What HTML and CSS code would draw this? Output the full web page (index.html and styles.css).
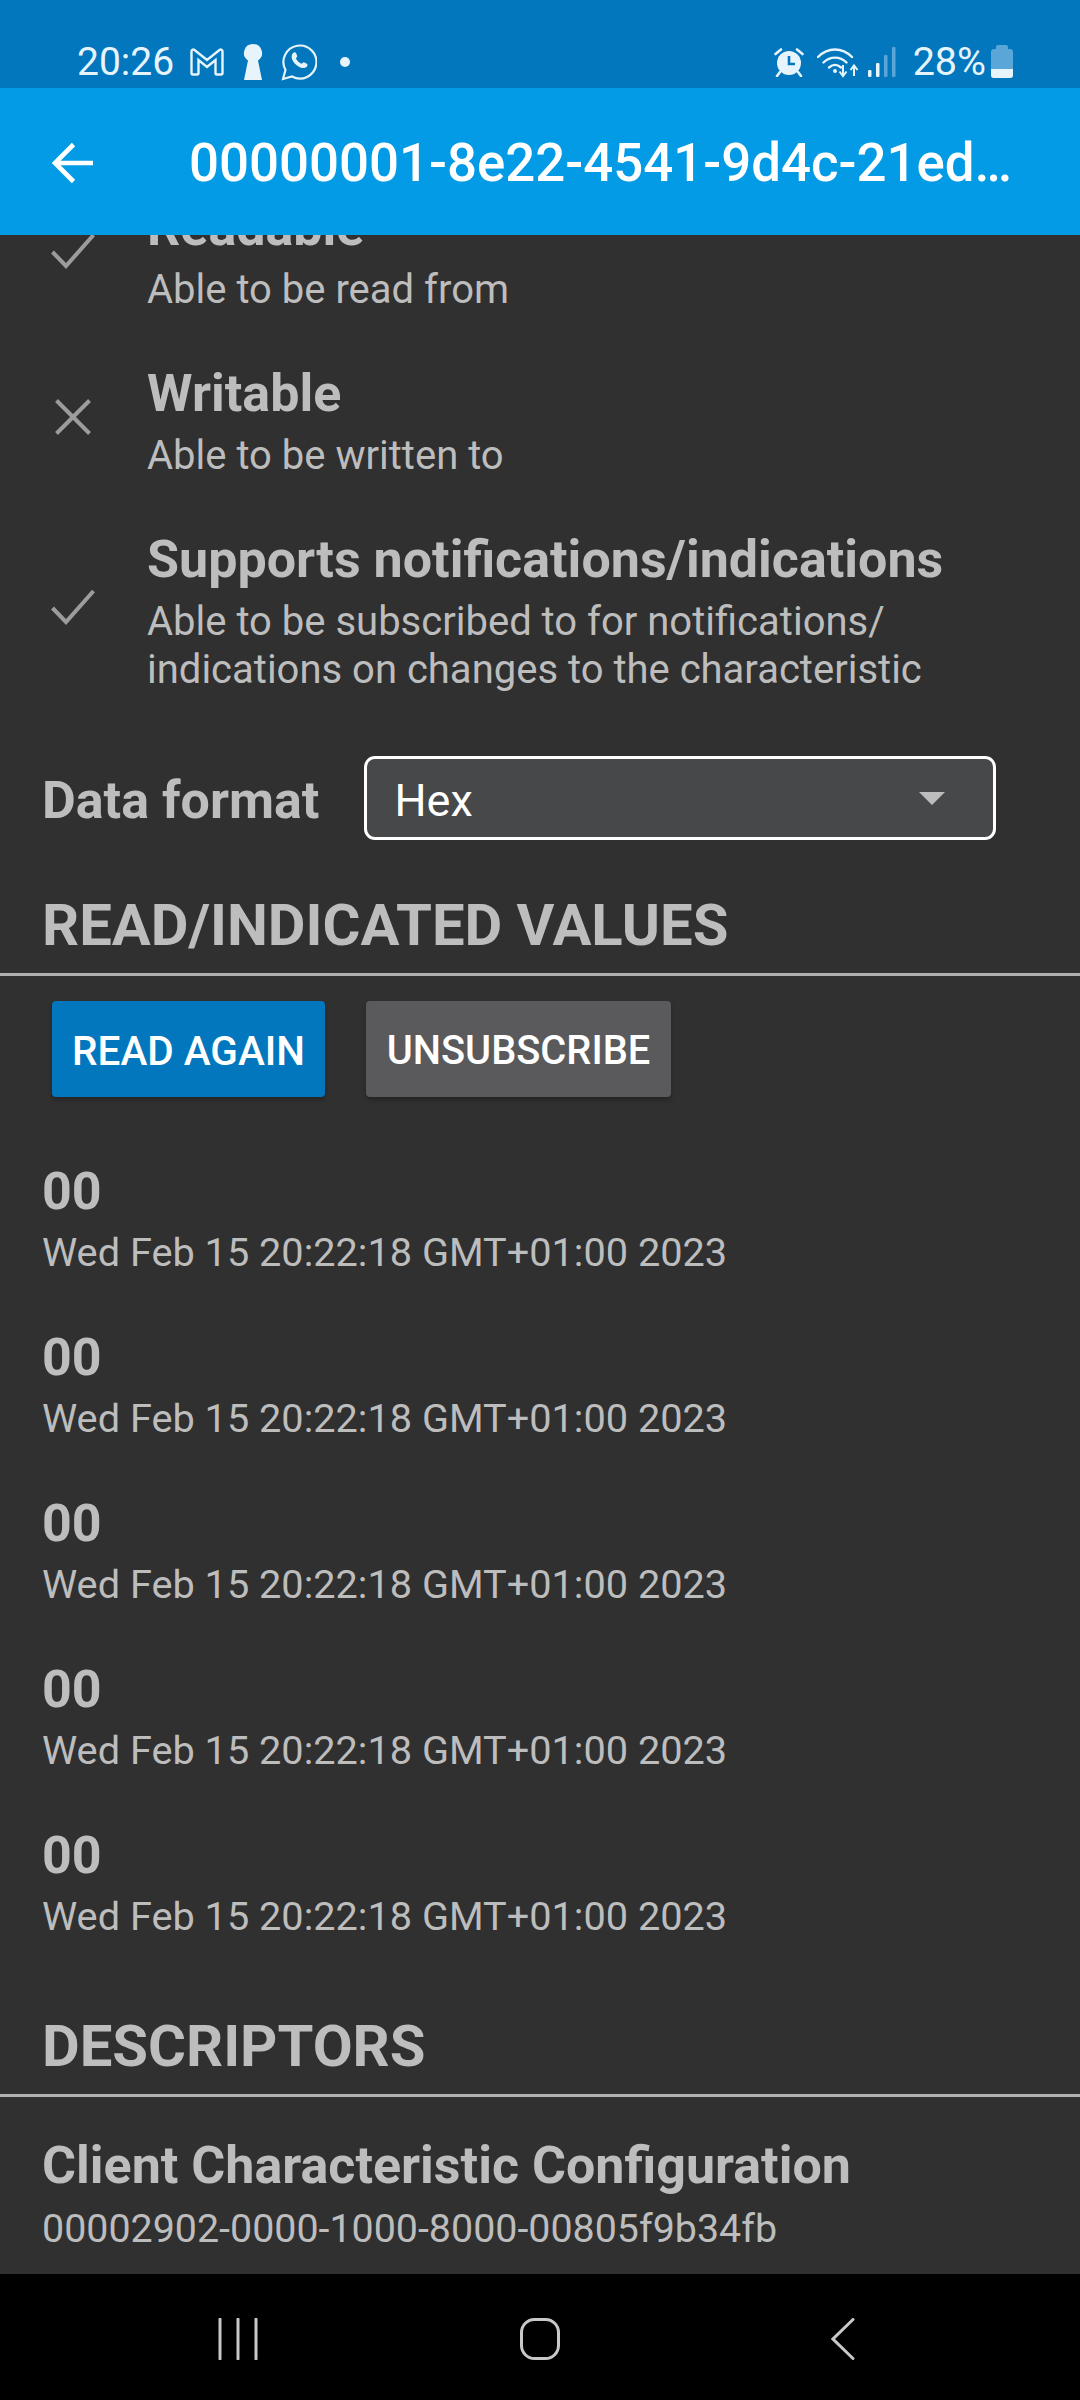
FILE: index.html
```html
<!DOCTYPE html>
<html lang="en">
<head>
<meta charset="utf-8">
<title>Characteristic</title>
<link rel="stylesheet" href="styles.css">
</head>
<body>
<div class="screen">
  <header class="status">
    <div class="status-group">
      <span class="time">20:26</span>
      <svg class="ic-gmail" viewBox="0 0 34 28"><path d="M1.500 3.500C1.500 2 3 1 4.500 2L17 12 29.500 2C31 1 32.500 2 32.500 3.500V25C32.500 26 32 26.500 31 26.500H27C26 26.500 25.500 26 25.500 25V12L17 19 8.500 12V25C8.500 26 8 26.500 7 26.500H3C2 26.500 1.500 26 1.500 25Z" fill="none" stroke="#e8f4fb" stroke-width="2.400"/></svg>
      <svg class="ic-key" viewBox="0 0 20 36"><path d="M10 0a9 9 0 0 1 5 16.500L19 36H1L5 16.500A9 9 0 0 1 10 0Z" fill="#e8f4fb"/></svg>
      <svg class="ic-wa" viewBox="0 0 36 38"><path d="M2 36l2.500-9A16.500 16.500 0 1 1 11 33.500Z" fill="none" stroke="#e8f4fb" stroke-width="2.200"/><path d="M12 10c1-1 2.500-1.200 3 0l1.200 3c.2.600-1.200 2-1.200 2.500.8 2.200 3 4.300 5.500 5.300.6 0 1.800-1.700 2.400-1.500l3 1.500c1 .6.600 2.300-.4 3.200-2 1.800-5 1.200-8-.5-3-1.700-5.500-4.500-6.500-7.500-.6-2-.3-4.500 1-6Z" fill="#e8f4fb"/></svg>
      <svg class="ic-dot" viewBox="0 0 10 10"><circle cx="5" cy="5" r="5" fill="#e8f4fb"/></svg>
    </div>
    <div class="status-group">
      <svg class="ic-alarm" viewBox="0 0 30 30"><circle cx="15" cy="16" r="12" fill="#e8f4fb"/><path d="M1.500 7L7 2.500M28.500 7L23 2.500M6 25l-3 4M24 25l3 4" stroke="#e8f4fb" stroke-width="2.600" stroke-linecap="round"/><path d="M15 9v8h6" fill="none" stroke="#0277bd" stroke-width="2.600"/></svg>
      <svg class="ic-wifi" viewBox="0 0 42 32"><path d="M1 11C11 1 25 1 35 11M6.500 16.500C13 10 23 10 29.500 16.500M12 21.500C16 18 20 18 24 21.500" fill="none" stroke="#e8f4fb" stroke-width="2.400" stroke-linecap="round"/><circle cx="18" cy="25" r="2" fill="#e8f4fb"/><path d="M26 19v10M22.500 25.500L26 30l3.500-4.500M37 30V20M33.500 24L37 19.500l3.500 4.500" fill="none" stroke="#e8f4fb" stroke-width="2"/></svg>
      <svg class="ic-signal" viewBox="0 0 28 30"><rect x="0" y="23" width="3.500" height="7" rx="1" fill="#e8f4fb"/><rect x="8" y="16" width="3.500" height="14" rx="1" fill="#e8f4fb"/><rect x="16" y="8" width="3.500" height="22" rx="1" fill="#5ba6d8"/><rect x="24" y="0" width="3.500" height="30" rx="1" fill="#5ba6d8"/></svg>
      <span class="pct">28%</span>
      <svg class="ic-batt" viewBox="0 0 22 33"><path d="M7 0h8a2 2 0 0 1 2 2v2h2a3 3 0 0 1 3 3v23a3 3 0 0 1-3 3H3a3 3 0 0 1-3-3V7a3 3 0 0 1 3-3h2V2a2 2 0 0 1 2-2Z" fill="#5ba6d8"/><path d="M0 24h22v6a3 3 0 0 1-3 3H3a3 3 0 0 1-3-3Z" fill="#e8f4fb"/></svg>
    </div>
  </header>

  <div class="appbar">
    <svg class="ic-back" viewBox="0 0 42 42"><path d="M41 21H3M21.500 2.500L3 21l18.500 18.500" fill="none" stroke="#fff" stroke-width="4.600"/></svg>
    <h1 class="appbar-title">00000001-8e22-4541-9d4c-21ed…</h1>
  </div>

  <main class="content">
    <div class="scroller">
      <section class="props">
        <div class="prop">
          <svg class="prop-icon" viewBox="0 0 44 36"><path d="M1.500 19L15 33 42.500 2" fill="none" stroke="#9c9c9c" stroke-width="4"/></svg>
          <div class="prop-text">
            <div class="prop-title">Readable</div>
            <div class="prop-desc">Able to be read from</div>
          </div>
        </div>
        <div class="prop">
          <svg class="prop-icon prop-x" viewBox="0 0 36 36"><path d="M1.500 1.500l33 33M34.500 1.500l-33 33" fill="none" stroke="#9c9c9c" stroke-width="4"/></svg>
          <div class="prop-text">
            <div class="prop-title">Writable</div>
            <div class="prop-desc">Able to be written to</div>
          </div>
        </div>
        <div class="prop">
          <svg class="prop-icon" viewBox="0 0 44 36"><path d="M1.500 19L15 33 42.500 2" fill="none" stroke="#9c9c9c" stroke-width="4"/></svg>
          <div class="prop-text">
            <div class="prop-title">Supports notifications/indications</div>
            <div class="prop-desc">Able to be subscribed to for notifications/<br>indications on changes to the characteristic</div>
          </div>
        </div>
      </section>

      <div class="format">
        <span class="format-label">Data format</span>
        <div class="dropdown">
          <span class="dropdown-value">Hex</span>
          <span class="caret"></span>
        </div>
      </div>

      <h2 class="section-head">READ/INDICATED VALUES</h2>
      <div class="actions">
        <button class="btn btn-primary">READ AGAIN</button>
        <button class="btn btn-grey">UNSUBSCRIBE</button>
      </div>

      <ul class="values">
        <li class="value"><div class="value-main">00</div><div class="value-sub">Wed Feb 15 20:22:18 GMT+01:00 2023</div></li>
        <li class="value"><div class="value-main">00</div><div class="value-sub">Wed Feb 15 20:22:18 GMT+01:00 2023</div></li>
        <li class="value"><div class="value-main">00</div><div class="value-sub">Wed Feb 15 20:22:18 GMT+01:00 2023</div></li>
        <li class="value"><div class="value-main">00</div><div class="value-sub">Wed Feb 15 20:22:18 GMT+01:00 2023</div></li>
        <li class="value"><div class="value-main">00</div><div class="value-sub">Wed Feb 15 20:22:18 GMT+01:00 2023</div></li>
      </ul>

      <h2 class="section-head section-desc">DESCRIPTORS</h2>
      <div class="descriptor">
        <div class="value-main">Client Characteristic Configuration</div>
        <div class="value-sub uuid">00002902-0000-1000-8000-00805f9b34fb</div>
      </div>
    </div>
  </main>

  <nav class="navbar">
    <svg class="nav-recents" viewBox="0 0 40 42"><path d="M2 1v40M20 1v40M38 1v40" stroke="#c8c8c8" stroke-width="3" stroke-linecap="round" fill="none"/></svg>
    <svg class="nav-home" viewBox="0 0 40 42"><rect x="1.500" y="1.500" width="37" height="39" rx="13" fill="none" stroke="#c8c8c8" stroke-width="3"/></svg>
    <svg class="nav-back" viewBox="0 0 24 42"><path d="M22 1.500L2 21l20 19.500" fill="none" stroke="#c8c8c8" stroke-width="3" stroke-linecap="round"/></svg>
  </nav>
</div>
</body>
</html>
```
FILE: styles.css
```css
* { box-sizing: border-box; }
html, body { margin: 0; padding: 0; }
body { font-family: Roboto, "Liberation Sans", sans-serif; background: #303030; }
.screen { width: 1080px; height: 2400px; display: flex; flex-direction: column; overflow: hidden; }

.status { height: 88px; flex: none; background: #0277bd; display: flex; justify-content: space-between; align-items: flex-start; padding: 43px 67px 0 77px; color: #e8f4fb; font-size: 39px; line-height: 36px; }
.status-group { display: flex; align-items: center; height: 37px; }
.ic-gmail { width: 34px; height: 28px; margin-left: 16px; }
.ic-key { width: 20px; height: 36px; margin-left: 19px; }
.ic-wa { width: 36px; height: 38px; margin-left: 18px; }
.ic-dot { width: 10px; height: 10px; margin-left: 23px; }
.ic-alarm { width: 30px; height: 30px; }
.ic-wifi { width: 42px; height: 32px; margin-left: 13px; }
.ic-signal { width: 28px; height: 30px; margin-left: 9px; }
.pct { margin-left: 17px; font-size: 39.500px; }
.ic-batt { width: 22px; height: 33px; margin-left: 5px; }

.appbar { height: 147px; flex: none; background: #039be5; display: flex; align-items: center; padding: 3px 0 0 52px; position: relative; z-index: 1; }
.ic-back { width: 42px; height: 42px; flex: none; }
.appbar-title { margin: 0 0 0 95px; font-size: 52.800px; font-weight: 500; color: #fff; white-space: nowrap; line-height: 60px; }

.content { flex: 1; min-height: 0; overflow: hidden; }
.scroller { margin-top: -37px; }

.prop { display: flex; align-items: center; padding-left: 51px; padding-bottom: 50px; }
.prop-icon { width: 44px; height: 36px; flex: none; margin-bottom: 11px; }
.prop-x { width: 36px; margin-left: 4px; margin-right: 4px; }
.prop-text { margin-left: 52px; }
.prop-title { font-size: 52px; font-weight: 700; line-height: 60px; color: #bdbdbd; margin-bottom: 8px; }
.prop-desc { font-size: 40px; line-height: 48px; color: #bdbdbd; }

.format { display: flex; align-items: center; padding-left: 42px; margin-top: 12px; }
.format-label { font-size: 52px; font-weight: 700; color: #bdbdbd; line-height: 60px; padding-top: 5px; }
.dropdown { margin-left: 45px; width: 632px; height: 84px; border: 3px solid #fff; border-radius: 11px; background: #47484a; display: flex; align-items: center; justify-content: space-between; padding: 0 48px 0 27px; color: #fff; font-size: 45px; }
.dropdown-value { padding-top: 5px; }
.caret { width: 0; height: 0; border-left: 13px solid transparent; border-right: 13px solid transparent; border-top: 13px solid #bdbdbd; }

.section-head { margin: 52px 0 0; padding: 0 0 15px 42px; font-size: 58px; line-height: 66px; font-weight: 700; color: #bdbdbd; border-bottom: 3px solid #b0b0b0; }
.actions { display: flex; gap: 41px; padding: 25px 0 0 52px; }
.btn { height: 96px; border: 0; border-radius: 4px; color: #fff; font: 500 40.500px/46px Roboto, "Liberation Sans", sans-serif; box-shadow: 0 3px 4px rgba(0,0,0,.25); padding: 4px 0 0; }
.btn-primary { background: #0277bd; width: 273px; }
.btn-grey { background: #5a5a5c; width: 305px; font-size: 39.800px; }

.values { list-style: none; margin: 0; padding: 65px 0 0; }
.value { padding-left: 42px; margin-bottom: 51px; }
.value-main { font-size: 52px; font-weight: 700; line-height: 60px; color: #bdbdbd; }
.value-sub { font-size: 39.700px; line-height: 48px; color: #bdbdbd; margin-top: 7px; }
.uuid { font-size: 39.400px; margin-top: 9px; }
.section-desc { margin-top: 72px; }
.descriptor { padding: 39px 0 0 42px; }

.navbar { height: 126px; flex: none; background: #000; position: relative; }
.nav-recents { position: absolute; left: 218px; top: 44px; width: 40px; height: 42px; }
.nav-home { position: absolute; left: 520px; top: 44px; width: 40px; height: 42px; }
.nav-back { position: absolute; left: 831px; top: 44px; width: 24px; height: 42px; }
```
